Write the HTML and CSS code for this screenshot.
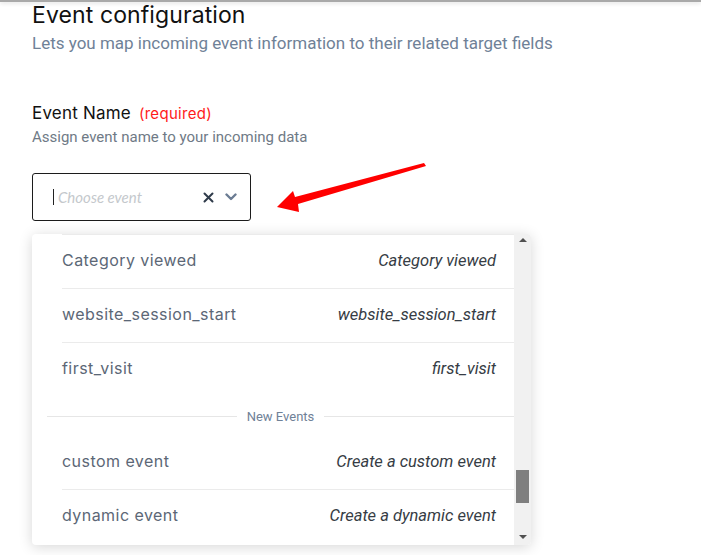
FILE: index.html
```html
<!DOCTYPE html>
<html>
<head>
<meta charset="utf-8">
<link rel="stylesheet" href="styles.css">
</head>
<body>
<div class="topline"></div>
<main class="page">
  <h1 class="title">Event configuration</h1>
  <p class="subtitle">Lets you map incoming event information to their related target fields</p>

  <section class="field">
    <h2 class="label">Event Name <span class="req">(required)</span></h2>
    <p class="help">Assign event name to your incoming data</p>
    <div class="select">
      <span class="caret"></span>
      <span class="placeholder">Choose event</span>
      <span class="icons">
        <svg class="clear" width="11" height="11" viewBox="0 0 11 11"><path d="M1.5 1.5 L9.5 9.5 M9.5 1.5 L1.5 9.5" stroke="#2f3b4a" stroke-width="2" stroke-linecap="round"/></svg>
        <svg class="chev" width="12" height="8" viewBox="0 0 12 8"><path d="M1.5 1.5 L6 6 L10.5 1.5" fill="none" stroke="#6b7c93" stroke-width="2.4" stroke-linecap="round" stroke-linejoin="round"/></svg>
      </span>
    </div>
  </section>

  <svg class="arrow" width="160" height="60" viewBox="270 160 160 60"><polygon points="277,207 293,191 295,197 424,163 426,166 298,204 299,212" fill="#ff0000"/></svg>

  <div class="menu">
    <div class="list">
      <div class="item first"><span class="name">Category viewed</span><span class="desc">Category viewed</span></div>
      <div class="item"><span class="name">website_session_start</span><span class="desc">website_session_start</span></div>
      <div class="item"><span class="name">first_visit</span><span class="desc">first_visit</span></div>
      <div class="group"><span class="gline"></span><span class="gtext">New Events</span><span class="gline"></span></div>
      <div class="item nob"><span class="name">custom event</span><span class="desc">Create a custom event</span></div>
      <div class="item"><span class="name">dynamic event</span><span class="desc">Create a dynamic event</span></div>
    </div>
    <div class="scrollbar">
      <span class="up"></span>
      <span class="track"><span class="thumb"></span></span>
      <span class="down"></span>
    </div>
  </div>
</main>
</body>
</html>
```

FILE: styles.css
```css
html, body {
  margin: 0;
  padding: 0;
  background: #ffffff;
}
body {
  width: 701px;
  height: 555px;
  overflow: hidden;
  position: relative;
  font-family: Roboto, "Liberation Sans", sans-serif;
}
.topline {
  height: 2px;
  background: #a9a9a9;
  box-shadow: 0 1px 4px rgba(0, 0, 0, 0.18);
}
.page {
  padding: 0 0 0 32px;
}
.title {
  margin: 0;
  font-family: Inter, "Open Sans", sans-serif;
  font-weight: 400;
  font-size: 23px;
  line-height: 26px;
  color: #111111;
  letter-spacing: 0.1px;
}
.subtitle {
  margin: 5px 0 0;
  font-size: 17px;
  line-height: 20px;
  color: #6f8197;
}
.field {
  margin-top: 50px;
}
.label {
  margin: 0;
  font-family: Inter, "Open Sans", sans-serif;
  font-weight: 400;
  font-size: 17px;
  line-height: 20px;
  color: #111111;
  letter-spacing: 0.2px;
}
.req {
  margin-left: 3px;
  font-size: 15px;
  color: #ff1a1a;
  letter-spacing: 0.3px;
}
.help {
  margin: 4px 0 0;
  font-size: 15px;
  line-height: 18px;
  color: #6f7a86;
}
.select {
  margin-top: 27px;
  width: 197px;
  height: 46px;
  border: 1px solid #1c1c1c;
  border-radius: 3px;
  display: flex;
  align-items: center;
  padding-left: 20px;
  box-sizing: content-box;
}
.caret {
  width: 1px;
  height: 16px;
  background: #222;
  margin-right: 4px;
}
.placeholder {
  font-family: Lato, sans-serif;
  font-style: italic;
  font-size: 15px;
  color: #c4c8cc;
  flex: 1;
}
.icons {
  display: flex;
  align-items: center;
  gap: 11px;
  padding-right: 13px;
}
.arrow {
  position: absolute;
  left: 270px;
  top: 160px;
}
.menu {
  position: absolute;
  left: 32px;
  top: 234px;
  width: 499px;
  height: 311px;
  background: #ffffff;
  border-radius: 4px;
  box-shadow: 0 2px 14px rgba(0, 0, 0, 0.16);
  display: flex;
  overflow: hidden;
}
.list {
  flex: 1;
}
.item {
  margin-left: 30px;
  height: 50px;
  padding-bottom: 3px;
  border-top: 1px solid #ebebeb;
  display: flex;
  align-items: center;
  justify-content: space-between;
  padding-right: 18px;
}
.item.nob {
  border-top: none;
}
.name {
  font-family: Inter, "Open Sans", sans-serif;
  font-size: 16px;
  letter-spacing: 0.45px;
  color: #5c6776;
}
.desc {
  font-style: italic;
  font-size: 16.5px;
  color: #363c44;
}
.group {
  margin-left: 15px;
  height: 40px;
  display: flex;
  align-items: center;
  gap: 10px;
}
.gline {
  flex: 1;
  height: 1px;
  background: #e6e6e6;
}
.gtext {
  font-size: 13px;
  color: #6f8197;
}
.scrollbar {
  width: 17px;
  background: #f1f1f1;
  display: flex;
  flex-direction: column;
  align-items: center;
}
.up, .down {
  width: 0;
  height: 0;
  border-left: 4px solid transparent;
  border-right: 4px solid transparent;
}
.up {
  margin-top: 4px;
  border-bottom: 4px solid #505050;
}
.down {
  margin-bottom: 6px;
  border-top: 4px solid #505050;
}
.track {
  flex: 1;
  width: 100%;
  display: flex;
  flex-direction: column;
  align-items: center;
  padding-top: 228px;
}
.thumb {
  width: 13px;
  height: 33px;
  background: #7f7f7f;
}
```
